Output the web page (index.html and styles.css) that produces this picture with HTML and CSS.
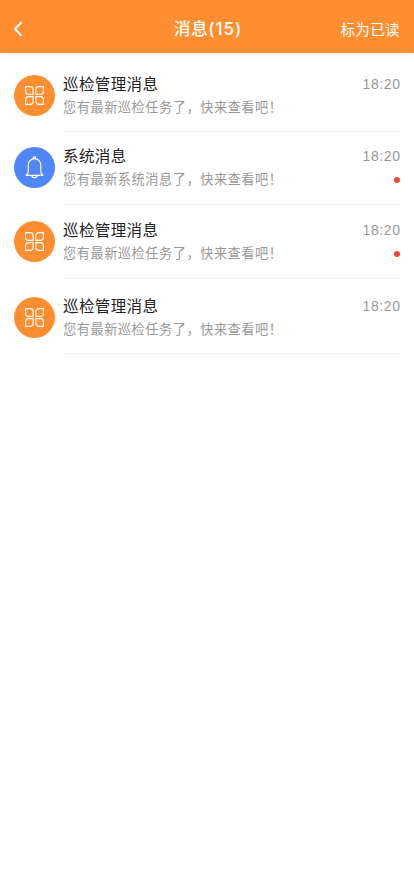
FILE: index.html
```html
<!DOCTYPE html>
<html lang="zh-CN">
<head>
<meta charset="utf-8">
<title>消息</title>
<link rel="stylesheet" href="styles.css">
</head>
<body>
<svg width="0" height="0" class="defs">
  <symbol id="grid" viewBox="0 0 20 20">
    <path d="M1.500 1.500h4.500a2.700 2.700 0 0 1 2.700 2.700V8.900H4.500A3 3 0 0 1 1.500 5.900zM18.500 1.500h-4.500a2.700 2.700 0 0 0-2.700 2.700V8.900h4.200A3 3 0 0 0 18.500 5.900zM1.500 18.500h4.500a2.700 2.700 0 0 0 2.700-2.700V11.100H4.500A3 3 0 0 0 1.500 14.100zM18.500 18.500h-4.500a2.700 2.700 0 0 1-2.700-2.700V11.100h4.200A3 3 0 0 1 18.500 14.100z"/>
  </symbol>
</svg>
<header class="bar">
  <svg class="back" viewBox="0 0 10 16"><path d="M8 1.800L2 8l6 6.200"/></svg>
  <h1>消息<span>(15)</span></h1>
  <span class="read">标为已读</span>
</header>
<main class="list">
  <article class="item first">
    <div class="avatar"><svg class="icon"><use href="#grid"/></svg></div>
    <div class="body"><div class="row"><h2>巡检管理消息</h2><time>18:20</time></div><div class="row sub"><p>您有最新巡检任务了，快来查看吧！</p></div></div>
  </article>
  <article class="item second">
    <div class="avatar blue"><svg class="bell" viewBox="0 0 20 24"><path d="M2 19.500h16M2 19.500q2-1.500 2-4V9.500a6 6 0 0 1 12 0v6q0 2.500 2 4M8.800 3.500V2.800a1.200 1.200 0 0 1 2.400 0v.7M7.500 19.700a2.500 2 0 0 0 5 0"/></svg></div>
    <div class="body"><div class="row"><h2>系统消息</h2><time>18:20</time></div><div class="row sub"><p>您有最新系统消息了，快来查看吧！</p><i class="dot"></i></div></div>
  </article>
  <article class="item third">
    <div class="avatar"><svg class="icon"><use href="#grid"/></svg></div>
    <div class="body"><div class="row"><h2>巡检管理消息</h2><time>18:20</time></div><div class="row sub"><p>您有最新巡检任务了，快来查看吧！</p><i class="dot"></i></div></div>
  </article>
  <article class="item fourth">
    <div class="avatar"><svg class="icon"><use href="#grid"/></svg></div>
    <div class="body"><div class="row"><h2>巡检管理消息</h2><time>18:20</time></div><div class="row sub"><p>您有最新巡检任务了，快来查看吧！</p></div></div>
  </article>
</main>
</body>
</html>
```
FILE: styles.css
```css
* { box-sizing: border-box; margin: 0; padding: 0; }
body { background: #fff; font-family: "Liberation Sans", "Noto Sans CJK SC", sans-serif; }
.defs { display: block; }
.bar { height: 53px; padding: 5px 14px 0 13px; background: #ff8e31; color: #fff; display: grid; grid-template-columns: 1fr auto 1fr; align-items: center; box-shadow: 0 1px 8px #00000014; }
.back { width: 10px; height: 16px; fill: none; stroke: #fff; stroke-width: 2; stroke-linecap: round; stroke-linejoin: round; }
h1 { font-size: 16.800px; line-height: 24px; font-weight: 500; letter-spacing: .5px; padding-left: 3px; }
h1 span { font-family: Inter, sans-serif; font-size: 17px; letter-spacing: 1px; }
.read { justify-self: end; font-size: 14.600px; line-height: 22px; letter-spacing: .3px; margin-top: 1px; }
.list { padding-top: 14px; }
.item { display: flex; gap: 8.500px; padding: 8px 14px 0 13.500px; height: 72px; }
.first { height: 65px; }
.second { height: 73px; padding-top: 15px; }
.third { height: 74px; padding-top: 16px; }
.fourth { height: 75px; padding-top: 17px; }
.avatar { width: 41px; height: 41px; margin-top: .3px; border-radius: 50%; background: #ff8e31; display: flex; align-items: center; justify-content: center; flex: none; }
.fourth .avatar { margin-top: 1px; }
.blue { background: #5087f8; }
.icon { width: 21px; height: 21px; }
.bell { width: 21px; height: 25px; }
.icon, .bell { fill: none; stroke: #fff; stroke-width: 1.1; stroke-linecap: round; stroke-linejoin: round; }
.body { flex: 1; border-bottom: 1px solid #f5f5f5; }
.body .row:first-child { margin-top: -2px; }
.fourth .row:first-child { margin-top: -1px; }
.row { display: flex; justify-content: space-between; align-items: center; height: 24px; white-space: nowrap; }
h2 { font-size: 15.500px; line-height: 24px; font-weight: 400; color: #222; letter-spacing: .4px; }
time { font-size: 14px; line-height: 22px; margin-top: -3px; color: #999; letter-spacing: .6px; margin-right: -.6px; }
.sub { height: 23px; }
p { font-size: 13.200px; line-height: 23px; margin-top: -2px; color: #999; letter-spacing: .53px; }
.dot { width: 6px; height: 6px; border-radius: 50%; background: #ee4a35; margin-top: -1px; }
```
